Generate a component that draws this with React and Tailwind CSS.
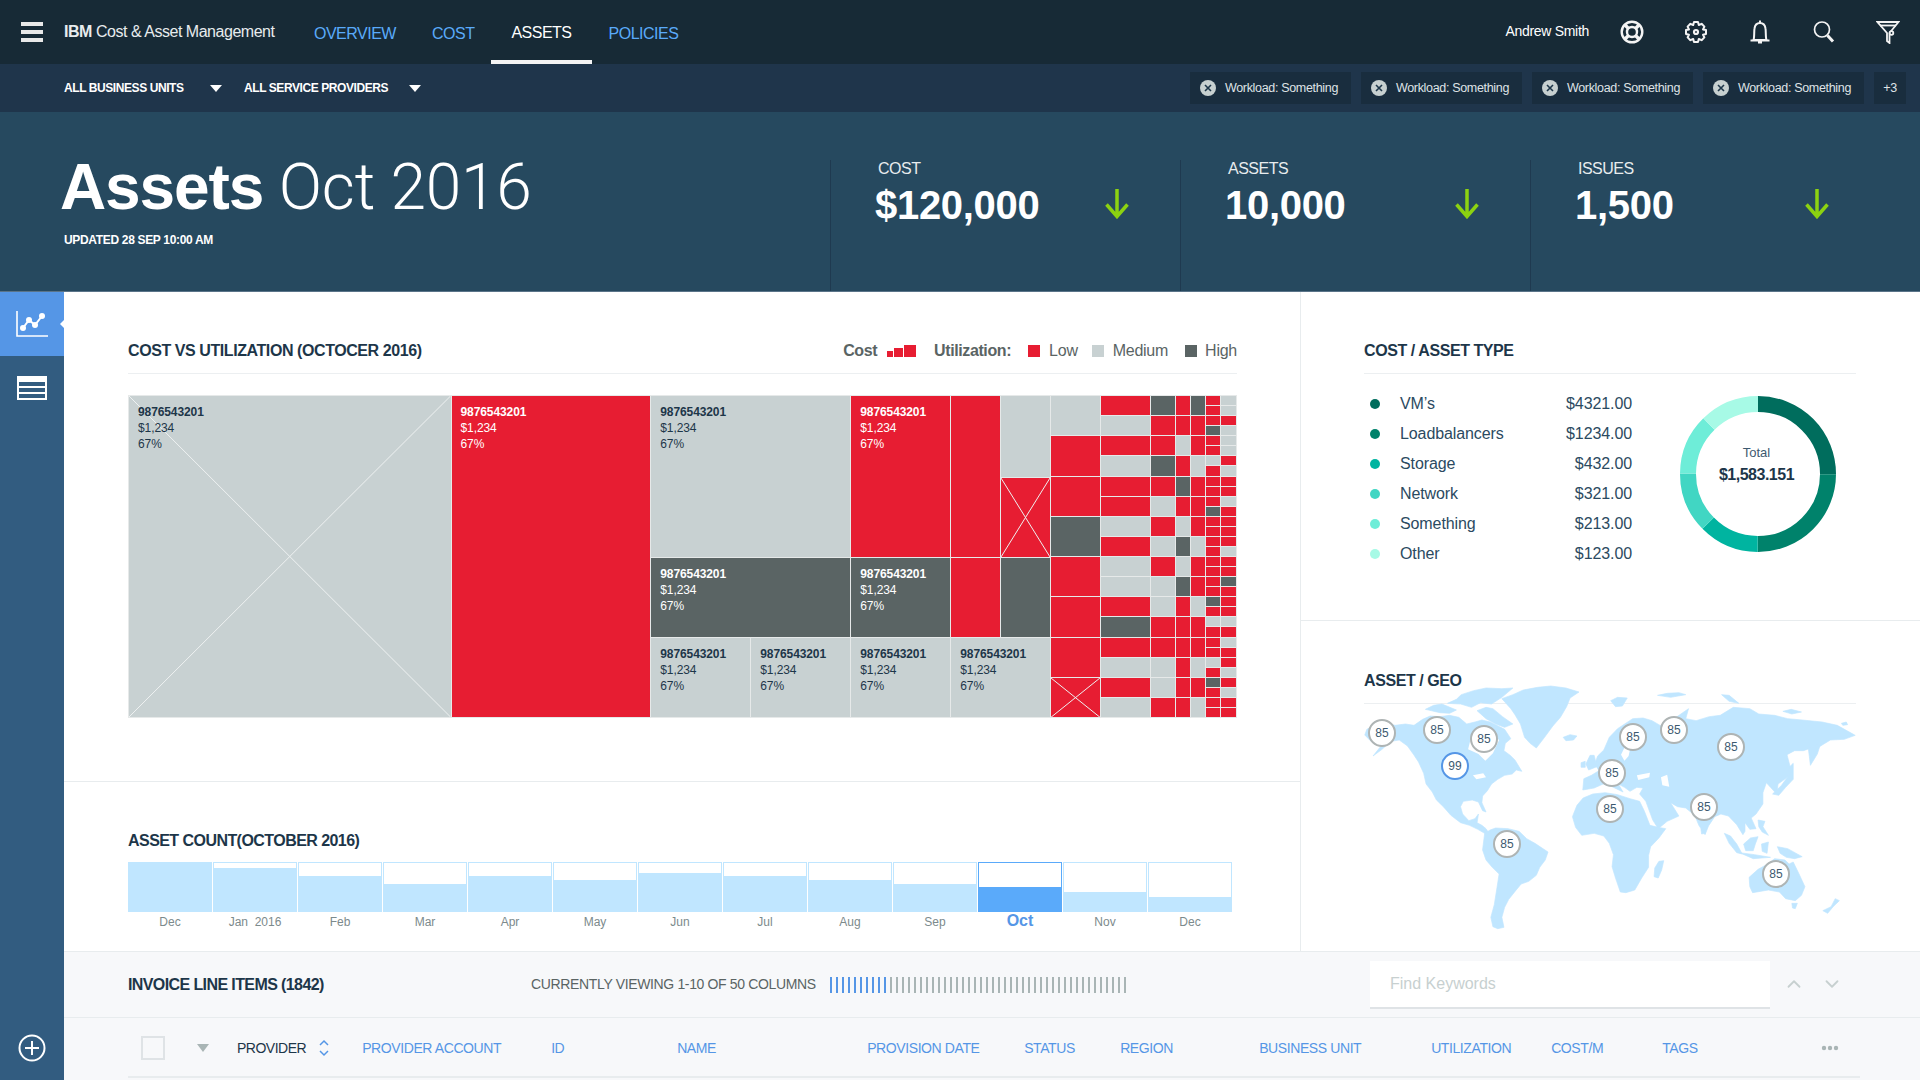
import { ChevronUp, ChevronDown } from 'lucide-react';

const TONES = {
  R: 'bg-[#e71d32] text-white',
  G: 'bg-[#c8d1d2] text-[#1d3649]',
  D: 'bg-[#5a6464] text-white',
};

// small treemap columns, read top to bottom
const COL_7 = 'GRRDRRRR';
const COL_8 = 'RGRGRRGRGGRDRGRG';
const COL_9 = 'DRRDRGRGRGGRRGGR';
const COL_10 = 'RRGRDRGDGDRRRRRR';
const COL_11 = 'DRRGRRRGRRGRRGRG';
const COL_12 = 'RRRDRRGRRRRDRRRRRRRRDRGRRRGRDRRR';
const COL_13 = 'GGRGGGRGRRGRRRRGRRDRRRGRGRRGRGRR';

const NAV = ['OVERVIEW', 'COST', 'ASSETS', 'POLICIES'];
const STATS = [
  { label: 'COST', value: '$120,000' },
  { label: 'ASSETS', value: '10,000' },
  { label: 'ISSUES', value: '1,500' },
];
const TYPES = [
  { name: 'VM’s', cost: '$4321.00', dot: 'bg-[#006d5d]' },
  { name: 'Loadbalancers', cost: '$1234.00', dot: 'bg-[#00826b]' },
  { name: 'Storage', cost: '$432.00', dot: 'bg-[#00b4a0]' },
  { name: 'Network', cost: '$321.00', dot: 'bg-[#41d6c3]' },
  { name: 'Something', cost: '$213.00', dot: 'bg-[#6eedd8]' },
  { name: 'Other', cost: '$123.00', dot: 'bg-[#a7fae6]' },
];
const MONTHS = [
  ['Dec', 100], ['Jan  2016', 90], ['Feb', 73], ['Mar', 57], ['Apr', 73], ['May', 64], ['Jun', 80],
  ['Jul', 73], ['Aug', 64], ['Sep', 57], ['Oct', 50], ['Nov', 40], ['Dec', 29],
];
const PINS = [
  [42, 73, 85], [97, 70, 85], [144, 79, 85], [115, 106, 99], [293, 77, 85], [334, 70, 85],
  [391, 87, 85], [272, 113, 85], [270, 149, 85], [364, 147, 85], [167, 184, 85], [436, 214, 85],
];
const COLUMNS = [
  ['PROVIDER ACCOUNT', 'w-[189px]'], ['ID', 'w-[126px]'], ['NAME', 'w-[190px]'], ['PROVISION DATE', 'w-[157px]'],
  ['STATUS', 'w-[96px]'], ['REGION', 'w-[139px]'], ['BUSINESS UNIT', 'w-[172px]'], ['UTILIZATION', 'w-[120px]'],
  ['COST/M', 'w-[111px]'], ['TAGS', 'w-[159px]'],
];

// world map outlines, coordinates in a 1568x840 box stretched over 540x280
const LAND = [
  // north america
  '72,225 78,208 100,196 125,188 160,196 190,192 215,196 240,178 262,168 290,170 318,166 345,172 368,192 392,186 412,180 436,186 455,196 478,208 496,236 480,250 476,272 494,286 508,300 528,334 512,330 500,342 478,346 458,358 440,372 428,392 414,408 412,428 424,456 414,452 402,426 384,420 358,424 350,440 356,462 374,482 392,476 402,462 398,488 412,496 424,506 434,522 420,520 400,508 376,496 350,488 322,466 300,440 280,420 268,396 250,372 243,340 228,306 214,284 196,258 172,240 148,244 122,268 96,288 116,262 130,242 108,246 88,242',
  // arctic islands
  '352,104 388,92 424,84 470,86 502,84 470,112 440,132 408,128 382,142 350,132 312,130 338,118',
  '398,152 424,142 444,146 472,170 502,192 478,202 452,192 424,176',
  '248,148 272,136 296,132 338,150 318,160 290,158',
  // greenland and iceland
  '470,116 502,104 532,90 574,82 612,78 656,84 694,96 668,114 658,140 640,172 618,198 594,232 570,264 552,250 536,232 524,192 508,164 496,146',
  '648,232 668,224 688,228 678,240 656,242',
  // south america
  '420,520 436,510 452,504 488,506 520,514 542,536 566,550 604,576 596,600 580,622 570,646 548,664 526,672 510,692 490,718 478,742 470,772 476,802 458,806 444,800 438,772 448,734 456,682 462,642 442,622 424,600 414,570',
  // africa
  '675,470 688,436 706,414 734,402 770,398 806,404 842,416 870,424 884,454 900,496 924,502 946,506 926,534 902,560 896,586 896,622 876,654 856,690 830,698 814,696 800,654 790,620 794,584 782,550 766,528 738,520 702,526 684,502',
  '926,604 940,602 934,630 924,654 912,650 914,624',
  // eurasia
  '705,390 708,356 730,346 752,332 740,312 748,288 766,270 782,232 806,206 850,176 880,174 906,182 936,200 958,192 976,172 1012,146 1004,176 1034,182 1072,170 1104,166 1142,142 1190,146 1216,162 1262,166 1300,176 1342,180 1400,186 1444,196 1496,226 1464,238 1424,240 1392,260 1368,264 1346,272 1320,272 1298,284 1306,316 1312,342 1288,360 1272,372 1268,402 1250,382 1238,368 1228,398 1228,432 1208,462 1194,474 1208,506 1190,508 1176,488 1176,514 1170,524 1152,494 1128,468 1106,462 1088,470 1070,498 1060,524 1042,496 1030,466 1004,444 980,440 960,428 984,468 950,484 924,506 908,480 888,424 870,402 880,384 862,382 842,394 826,382 808,372 822,396 790,380 764,372 738,384',
  '1360,266 1396,250 1386,282 1366,316',
  '1256,402 1282,376 1300,350 1306,320 1316,310 1316,358 1294,382 1274,406',
  '714,312 726,286 738,286 746,320 722,330',
  '700,308 712,304 712,322 700,322',
  // small northern islands
  '786,122 806,112 834,114 820,138 800,140',
  '922,106 950,100 984,98 1004,104 960,112',
  '1108,104 1130,106 1158,130 1130,124',
  '1286,154 1310,148 1340,156 1312,162',
  '1456,190 1470,186 1474,194 1460,196',
  // south east asia
  '1116,520 1134,528 1152,552 1168,582 1152,578 1130,550',
  '1172,552 1192,534 1214,530 1206,552 1200,572 1178,572',
  '1160,578 1204,584 1250,592 1200,596',
  '1224,552 1244,546 1240,580 1226,574',
  '1214,480 1234,484 1228,500 1244,526 1226,516 1216,500',
  '1270,560 1300,566 1342,590 1320,596 1296,592 1278,580',
  '1048,506 1060,504 1060,520 1050,522',
  // australia and new zealand
  '1188,652 1214,628 1242,612 1262,596 1292,600 1304,612 1316,606 1332,640 1350,680 1340,706 1322,722 1294,716 1276,696 1244,690 1198,698 1190,680',
  '1312,730 1328,730 1322,746 1314,744',
  '1402,752 1426,740 1438,716 1450,722 1432,740 1416,760',
];
const WATER = [
  '372,268 382,226 430,214 462,240 444,280 422,302 402,282',
  '862,346 900,338 898,352 866,360',
  '932,352 950,344 956,380 936,376',
  '386,346 416,340 424,352 396,358',
  '816,284 834,246 846,250 838,288 826,302',
];

function Cross() {
  return (
    <svg className="absolute inset-0 w-full h-full" viewBox="0 0 100 100" preserveAspectRatio="none">
      <path d="M0 0 L100 100 M100 0 L0 100" stroke="#eef1f1" strokeWidth="1" vectorEffect="non-scaling-stroke" fill="none" />
    </svg>
  );
}

function Tile({ tone, label, cross, className = 'flex-1' }) {
  return (
    <div className={`relative min-h-0 ${TONES[tone]} ${className}`}>
      {cross && <Cross />}
      {label && (
        <div className="relative pl-[9px] pt-[8px] text-[12px] leading-[16px] tracking-[-0.1px]">
          <div className="font-bold">9876543201</div>
          <div>$1,234</div>
          <div>67%</div>
        </div>
      )}
    </div>
  );
}

function TileColumn({ tones, width }) {
  return (
    <div className={`flex flex-col gap-px ${width}`}>
      {tones.split('').map((t, i) => <Tile key={i} tone={t} />)}
    </div>
  );
}

function Arrow() {
  return (
    <svg className="-mt-[3px]" width="26" height="30" viewBox="0 0 26 30" fill="none" stroke="#8cd211" strokeWidth="3.5">
      <path d="M13 0 V27 M2.5 15.5 L13 27.5 L23.5 15.5" />
    </svg>
  );
}

function SectionTitle({ children, right, className = '' }) {
  return (
    <div className={`flex items-center justify-between h-[46px] border-b border-[#eceff1] ${className}`}>
      <h2 className="text-[16px] font-bold text-[#1d3649] tracking-[-0.42px]">{children}</h2>
      {right}
    </div>
  );
}

function Legend() {
  return (
    <div className="flex items-center text-[16px] text-[#5a6464] tracking-[-0.25px]">
      <span className="font-bold tracking-[-0.4px]">Cost</span>
      <span className="flex items-end ml-[10px] gap-px">
        <i className="block w-[6px] h-[6px] bg-[#e71d32]" />
        <i className="block w-[9px] h-[9px] bg-[#e71d32]" />
        <i className="block w-[12px] h-[12px] bg-[#e71d32]" />
      </span>
      <span className="font-bold tracking-[-0.4px] ml-[18px]">Utilization:</span>
      <i className="block w-3 h-3 ml-[17px] bg-[#e71d32]" />
      <span className="ml-[9px]">Low</span>
      <i className="block w-3 h-3 ml-[14px] bg-[#c8d1d2]" />
      <span className="ml-[9px]">Medium</span>
      <i className="block w-3 h-3 ml-[17px] bg-[#5a6464]" />
      <span className="ml-[8px]">High</span>
    </div>
  );
}

function Treemap() {
  return (
    <div className="flex gap-px p-px w-[1109px] h-[323px] mt-[21px] bg-[#e6e9e9]">
      <Tile tone="G" label cross className="w-[322px]" />
      <Tile tone="R" label className="w-[199px]" />
      <div className="flex flex-col gap-px w-[399px]">
        <div className="flex gap-px h-[241px]">
          <div className="flex flex-col gap-px w-[199px]">
            <Tile tone="G" label className="h-[161px]" />
            <Tile tone="D" label />
          </div>
          <div className="flex flex-col gap-px w-[99px]">
            <Tile tone="R" label className="h-[161px]" />
            <Tile tone="D" label />
          </div>
          <div className="flex flex-col gap-px w-[49px]">
            <Tile tone="R" className="h-[161px]" />
            <Tile tone="R" />
          </div>
          <div className="flex flex-col gap-px w-[49px]">
            <Tile tone="G" className="h-[81px]" />
            <Tile tone="R" cross className="h-[79px]" />
            <Tile tone="D" />
          </div>
        </div>
        <div className="flex gap-px flex-1">
          <Tile tone="G" label className="w-[99px]" />
          <Tile tone="G" label className="w-[99px]" />
          <Tile tone="G" label className="w-[99px]" />
          <Tile tone="G" label className="w-[99px]" />
        </div>
      </div>
      <div className="flex flex-col gap-px w-[49px]">
        {COL_7.split('').map((t, i) => <Tile key={i} tone={t} cross={i === 7} />)}
      </div>
      <TileColumn tones={COL_8} width="w-[49px]" />
      <TileColumn tones={COL_9} width="w-[24px]" />
      <TileColumn tones={COL_10} width="w-[14px]" />
      <TileColumn tones={COL_11} width="w-[14px]" />
      <TileColumn tones={COL_12} width="w-[14px]" />
      <TileColumn tones={COL_13} width="w-[15px]" />
    </div>
  );
}

function AssetCount() {
  return (
    <div className="flex-1 pl-16 pt-[48px]">
      <h2 className="text-[16px] leading-[22px] font-bold text-[#1d3649] tracking-[-0.55px]">ASSET COUNT(OCTOBER 2016)</h2>
      <div className="flex gap-px mt-[10px]">
        {MONTHS.map(([m, v], i) => {
          const active = m === 'Oct';
          return (
            <div key={i} className="w-[84px] text-center">
              <div className={`h-[50px] border flex flex-col justify-end ${active ? 'border-[#5aaafa]' : 'border-[#c0e6ff]'}`}>
                <div className={active ? 'bg-[#5aaafa]' : 'bg-[#c0e6ff]'} style={{ height: `${v}%` }} />
              </div>
              {active
                ? <div className="text-[16px] leading-[20px] font-bold text-[#5596e6] -mt-px">Oct</div>
                : <div className="text-[12px] leading-[20px] text-[#7c8a8c] whitespace-pre">{m}</div>}
            </div>
          );
        })}
      </div>
    </div>
  );
}

function Donut() {
  // one stroke per slice, r=70 on a 156 box
  const c = 2 * Math.PI * 70;
  const slices = [
    ['#006d5d', 0, 0.25], ['#00826b', 0.25, 0.25], ['#00b4a0', 0.5, 0.125],
    ['#41d6c3', 0.625, 0.125], ['#6eedd8', 0.75, 0.125], ['#a7fae6', 0.875, 0.125],
  ];
  return (
    <div className="relative w-[156px] h-[156px] shrink-0">
      <svg width="156" height="156" viewBox="0 0 156 156" className="-rotate-90">
        {slices.map(([color, start, size]) => (
          <circle
            key={color}
            cx="78"
            cy="78"
            r="70"
            fill="none"
            stroke={color}
            strokeWidth="16"
            strokeDasharray={`${size * c} ${c}`}
            strokeDashoffset={-start * c}
          />
        ))}
      </svg>
      <div className="absolute inset-0 flex flex-col items-center justify-center text-[#1d3649] pb-[20px] -ml-[3px]">
        <div className="text-[13px] leading-[22px] text-[#3d5a70]">Total</div>
        <div className="text-[16px] leading-[22px] font-bold tracking-[-0.5px]">$1,583.151</div>
      </div>
    </div>
  );
}

function CostByType() {
  return (
    <section className="h-[329px] border-b border-[#e8ecee] pl-[63px] pr-16 pt-[36px]">
      <SectionTitle>COST / ASSET TYPE</SectionTitle>
      <div className="flex items-start justify-between pr-[20px] pt-[22px]">
        <div className="w-[268px] pl-[6px] -mt-[7px]">
          {TYPES.map(t => (
            <div key={t.name} className="flex items-center h-[30px] text-[16px] text-[#2b4a61] tracking-[-0.1px]">
              <i className={`block w-[10px] h-[10px] rounded-full ${t.dot}`} />
              <span className="ml-[20px]">{t.name}</span>
              <span className="ml-auto">{t.cost}</span>
            </div>
          ))}
        </div>
        <Donut />
      </div>
    </section>
  );
}

function GeoMap() {
  return (
    <section className="relative flex-1 pl-[63px] pr-16 pt-[37px]">
      <SectionTitle>ASSET / GEO</SectionTitle>
      <svg className="absolute left-[39px] top-[39px]" width="540" height="280" viewBox="0 0 1568 840" preserveAspectRatio="none">
        {LAND.map((pts, i) => <polygon key={i} points={pts} fill="#c0e6ff" stroke="#c0e6ff" strokeWidth="2" strokeLinejoin="round" />)}
        {WATER.map((pts, i) => <polygon key={i} points={pts} fill="#fff" />)}
      </svg>
      {PINS.map(([x, y, n], i) => (
        <div
          key={i}
          className={`absolute w-[28px] h-[28px] -ml-[14px] -mt-[14px] rounded-full bg-white border-2 flex items-center justify-center text-[12px] text-[#3d5a70] ${n === 99 ? 'border-[#5596e6]' : 'border-[#aeb4b4]'}`}
          style={{ left: x + 39, top: y + 39 }}
        >
          {n}
        </div>
      ))}
    </section>
  );
}

function TopBar() {
  return (
    <header className="h-16 bg-[#172a36] flex items-center text-white shrink-0">
      <div className="w-16 pl-[21px]">
        <div className="flex flex-col gap-[4px] w-[22px]">
          <i className="block h-[4px] bg-[#e8e8e8]" />
          <i className="block h-[4px] bg-[#e8e8e8]" />
          <i className="block h-[4px] bg-[#e8e8e8]" />
        </div>
      </div>
      <div className="w-[231px] text-[16px] tracking-[-0.47px] text-[#e8ecee] -mt-[1px]">
        <span className="font-bold">IBM</span> Cost &amp; Asset Management
      </div>
      <nav className="flex h-full ml-px">
        {NAV.map(n => n === 'ASSETS' ? (
          <a key={n} className="h-full flex items-center px-5 -mx-px text-[16px] tracking-[-0.5px] text-white border-b-4 border-[#f4f4f4] pt-[6px]">{n}</a>
        ) : (
          <a key={n} className="h-full flex items-center px-[18px] text-[16px] tracking-[-0.5px] text-[#5aaafa] pt-[3px]">{n}</a>
        ))}
      </nav>
      <div className="ml-auto text-[14px] tracking-[-0.3px] mr-[31px] -mt-[1px]">Andrew Smith</div>
      <div className="flex items-center gap-[40px] pr-[20px]">
        <svg width="24" height="24" viewBox="0 0 24 24" fill="none" stroke="#f4f4f4" strokeWidth="2.4">
          <circle cx="12" cy="12" r="10.3" />
          <circle cx="12" cy="12" r="5" />
          <path d="M5 5 L8.5 8.5 M19 5 L15.5 8.5 M5 19 L8.5 15.5 M19 19 L15.5 15.5" strokeWidth="3.4" />
        </svg>
        <svg width="24" height="24" viewBox="0 0 24 24" fill="none" stroke="#f4f4f4" strokeWidth="2" strokeLinejoin="round">
          <path d="M10 2 H14 L14.8 5 L17.6 3.8 L20.4 6.6 L19 9.4 L22 10 V14 L19 14.8 L20.4 17.4 L17.6 20.2 L14.8 19 L14 22 H10 L9.2 19 L6.4 20.2 L3.6 17.4 L5 14.8 L2 14 V10 L5 9.4 L3.6 6.6 L6.4 3.8 L9.2 5 Z" />
          <circle cx="12" cy="12" r="2" strokeWidth="2.2" />
        </svg>
        <svg width="24" height="24" viewBox="0 0 24 24" fill="none" stroke="#f4f4f4" strokeWidth="2">
          <path d="M5.5 20 C6.5 18 6 11 6.5 8.5 C7 5 9.5 3 12 3 C14.5 3 17 5 17.5 8.5 C18 11 17.5 18 18.5 20 Z" />
          <path d="M2.5 20.5 H21.5 M10 22.5 H14 M12 0.5 V3" />
        </svg>
        <svg width="24" height="24" viewBox="0 0 24 24" fill="none" stroke="#f4f4f4" strokeWidth="1.7">
          <circle cx="10" cy="9.5" r="7.5" />
          <path d="M15.5 15.5 L21 21.5" strokeWidth="3" />
        </svg>
        <svg width="24" height="24" viewBox="0 0 24 24" fill="none" stroke="#f4f4f4" strokeWidth="1.8">
          <path d="M1.5 2 H22.5 L13.5 13 V23 L11 21 V13 Z" />
          <path d="M4 5.5 H20" />
          <circle cx="15.5" cy="13" r="1.8" fill="#172a36" />
        </svg>
      </div>
    </header>
  );
}

function FilterBar() {
  return (
    <div className="h-12 bg-[#1f354b] flex items-center text-white shrink-0 pl-16 pr-[14px]">
      <span className="w-[146px] text-[12px] font-bold tracking-[-0.42px]">ALL BUSINESS UNITS</span>
      <i className="block w-0 h-0 border-x-[6px] border-x-transparent border-t-[7px] border-t-white" />
      <span className="ml-[22px] w-[165px] text-[12px] font-bold tracking-[-0.42px]">ALL SERVICE PROVIDERS</span>
      <i className="block w-0 h-0 border-x-[6px] border-x-transparent border-t-[7px] border-t-white" />
      <div className="ml-auto flex gap-[10px] text-[12.5px] text-[#dfe3e6] tracking-[-0.33px]">
        {[0, 1, 2, 3].map(i => (
          <div key={i} className="h-8 w-[161px] bg-[#192d3e] flex items-center pl-[10px]">
            <span className="w-4 h-4 rounded-full bg-[#c7d0d0] text-[#1d3649] flex items-center justify-center">
              <svg width="8" height="8" viewBox="0 0 8 8" stroke="currentColor" strokeWidth="1.6"><path d="M1 1 L7 7 M7 1 L1 7" /></svg>
            </span>
            <span className="ml-[9px]">Workload: Something</span>
          </div>
        ))}
        <div className="h-8 w-8 bg-[#192d3e] flex items-center justify-center">+3</div>
      </div>
    </div>
  );
}

function Hero() {
  return (
    <div className="h-[180px] bg-[#26495f] flex text-white shrink-0 border-b border-[#5a7489]">
      <div className="w-[830px] pl-[60px] pt-[33px]">
        <h1 className="text-[64px] leading-[84px] font-['Roboto',sans-serif] font-light tracking-[-0.2px]">
          <span className="font-['Liberation_Sans',sans-serif] font-bold tracking-[-1.1px]">Assets</span> Oct 2016
        </h1>
        <div className="text-[12px] tracking-[-0.33px] mt-[1px] ml-[4px] font-bold">UPDATED 28 SEP 10:00 AM</div>
      </div>
      {STATS.map(s => (
        <div key={s.label} className="w-[350px] mt-12 border-l border-[#1f3a50] pl-[47px] pr-[50px]">
          <div className="text-[16px] leading-[18px] tracking-[-0.5px] text-[#e8ecee]">{s.label}</div>
          <div className="flex items-center justify-between -ml-[3px] mt-[2px]">
            <span className="text-[40px] leading-[50px] font-bold tracking-[-0.3px]">{s.value}</span>
            <Arrow />
          </div>
        </div>
      ))}
    </div>
  );
}

function SideNav() {
  return (
    <aside className="w-16 bg-[#325c80] flex flex-col items-center shrink-0">
      <div className="relative w-full h-16 bg-[#5596e6] flex items-center justify-center">
        <svg width="32" height="26" viewBox="0 0 32 26" fill="none" stroke="#fff">
          <path d="M1 0 V25 H32" strokeWidth="1.6" />
          <path d="M7 17 L13 9 L19 14 L26 5" strokeWidth="2" />
          <g fill="#fff" stroke="none">
            <circle cx="7" cy="17" r="3" />
            <circle cx="13" cy="9" r="3" />
            <circle cx="19" cy="14" r="3" />
            <circle cx="26" cy="5" r="3" />
          </g>
        </svg>
        <i className="absolute right-0 top-[28px] w-0 h-0 border-y-[4px] border-y-transparent border-r-[4px] border-r-white" />
      </div>
      <div className="mt-[20px] w-[30px] h-[24px] bg-white pt-[6px] pb-[2px] px-[2px] flex flex-col gap-[2px]">
        <i className="block flex-1 bg-[#325c80]" />
        <i className="block flex-1 bg-[#325c80]" />
        <i className="block flex-1 bg-[#325c80]" />
      </div>
      <svg className="mt-auto mb-[18px]" width="28" height="28" viewBox="0 0 28 28" fill="none" stroke="#fff" strokeWidth="2">
        <circle cx="14" cy="14" r="12.5" />
        <path d="M14 7 V21 M7 14 H21" />
      </svg>
    </aside>
  );
}

function Invoice() {
  return (
    <div className="flex-1 bg-[#f7f8fa] border-t border-[#e8ecee]">
      <div className="h-[66px] flex items-center pl-16 border-b border-[#e8ecee]">
        <h2 className="w-[403px] text-[16px] font-bold text-[#1d3649] tracking-[-0.6px]">INVOICE LINE ITEMS (1842)</h2>
        <span className="w-[299px] text-[14px] text-[#5a6464] tracking-[-0.35px]">CURRENTLY VIEWING 1-10 OF 50 COLUMNS</span>
        <div className="flex gap-[4px] w-[540px]">
          {Array.from({ length: 50 }, (_, i) => (
            <i key={i} className={`block w-[2px] h-[16px] ${i < 10 ? 'bg-[#5596e6]' : 'bg-[#a9b5b5]'}`} />
          ))}
        </div>
        <div className="w-[400px] h-[48px] bg-white border-b-2 border-[#dfe3e6] flex items-center pl-5 text-[16px] text-[#c7d0d0]">Find Keywords</div>
        <ChevronUp className="ml-[13px] -mt-[2px] text-[#c7d0d0]" size={22} />
        <ChevronDown className="ml-[16px] -mt-[2px] text-[#c7d0d0]" size={22} />
      </div>
      <div className="mx-16 mr-[60px] h-[60px] flex items-center border-b-2 border-[#e8ecee] text-[14px] text-[#5596e6] tracking-[-0.4px] pt-[2px]">
        <i className="block w-6 h-6 ml-[13px] border-2 border-[#dfe3e6]" />
        <i className="block w-0 h-0 ml-[32px] border-x-[6px] border-x-transparent border-t-[8px] border-t-[#a9b5b5]" />
        <span className="ml-[28px] text-[#1d3649] tracking-[-0.5px]">PROVIDER</span>
        <svg className="ml-[12px]" width="12" height="18" viewBox="0 0 12 18" fill="none" stroke="#5596e6" strokeWidth="1.5">
          <path d="M2 6 L6 2 L10 6 M2 12 L6 16 L10 12" />
        </svg>
        <div className="ml-[32px] flex">
          {COLUMNS.map(([name, w]) => <span key={name} className={w}>{name}</span>)}
        </div>
        <svg width="18" height="6" viewBox="0 0 18 6" fill="#a9b5b5">
          <circle cx="3" cy="3" r="2.2" /><circle cx="9" cy="3" r="2.2" /><circle cx="15" cy="3" r="2.2" />
        </svg>
      </div>
    </div>
  );
}

export default function App() {
  return (
    <div className="h-screen w-full overflow-hidden flex flex-col bg-white font-['Liberation_Sans',Arial,sans-serif]">
      <TopBar />
      <FilterBar />
      <Hero />
      <div className="flex flex-1 min-h-0">
        <SideNav />
        <div className="flex-1 flex flex-col min-w-0">
          <div className="flex h-[659px]">
            <div className="w-[1237px] flex flex-col border-r border-[#e8ecee]">
              <section className="h-[490px] border-b border-[#e8ecee] pl-16 pr-[63px] pt-[36px]">
                <SectionTitle right={<Legend />}>
                  COST VS UTILIZATION (OCTOCER 2016)
                </SectionTitle>
                <Treemap />
              </section>
              <AssetCount />
            </div>
            <div className="flex-1 flex flex-col">
              <CostByType />
              <GeoMap />
            </div>
          </div>
          <Invoice />
        </div>
      </div>
    </div>
  );
}
